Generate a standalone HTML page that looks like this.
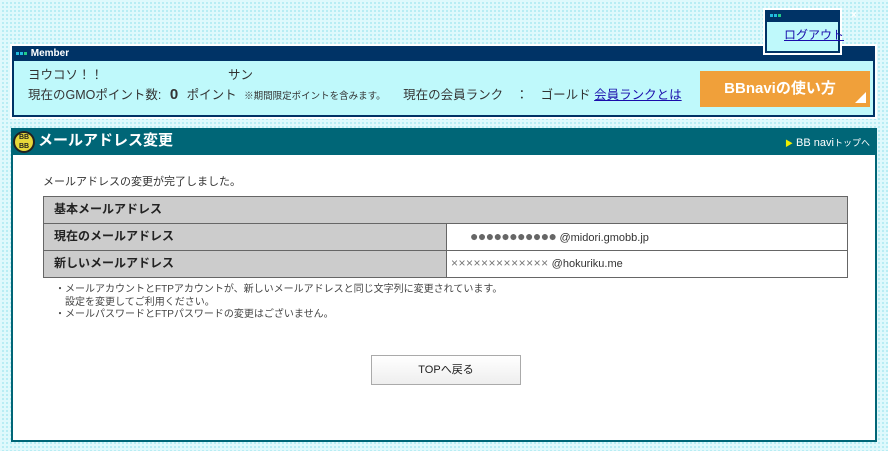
<!DOCTYPE html>
<html><head><meta charset="utf-8"><style>
*{margin:0;padding:0;box-sizing:border-box}
body{width:888px;height:451px;overflow:hidden;position:relative;font-family:"Liberation Sans","Noto Sans CJK JP",sans-serif;font-size:12px;color:#333;
background-color:#dff9fc;background-image:radial-gradient(circle,#b5ecf3 1px,transparent 1.2px);background-size:4px 4px;background-position:1px 1px}
.abs{position:absolute;line-height:1.2}
a{color:#1a0dab}
.hdr{background:#003366;color:#fff;font-weight:bold;font-size:10px}
.sq{display:inline-block;width:3px;height:3px;margin-right:1px;vertical-align:middle}
</style></head><body>
<!-- member -->
<div class="abs" style="left:10px;top:44px;width:867px;height:75px;background:#fff"></div>
<div class="abs" style="left:12px;top:46px;width:863px;height:71px;background:#003366"></div>
<div class="abs" style="left:14px;top:61px;width:859px;height:54px;background:#bff9fb"></div>
<div class="abs hdr" style="left:16px;top:47px;line-height:13px"><span class="sq" style="background:#2bd"></span><span class="sq" style="background:#2bd"></span><span class="sq" style="background:#2c8"></span> Member</div>
<div class="abs" style="left:28px;top:68px;font-size:12.5px">ヨウコソ！！</div>
<div class="abs" style="left:228px;top:68px;font-size:12.5px">サン</div>
<div class="abs" style="left:28px;top:86px;font-size:12.5px;white-space:nowrap">現在のGMOポイント数: <b style="font-size:15px;margin:0 5px">0</b> ポイント <span style="font-size:9.5px;margin:0 14px 0 4px">※期間限定ポイントを含みます。</span> 現在の会員ランク　：　ゴールド <a href="#">会員ランクとは</a></div>
<div class="abs" style="left:700px;top:71px;width:170px;height:36px;background:#f0a03a;color:#fff;font-weight:bold;font-size:15px;line-height:36px;text-align:center;padding-right:10px">BBnaviの使い方</div>
<div class="abs" style="left:855px;top:92px;width:0;height:0;border-left:11px solid transparent;border-bottom:11px solid #fff"></div>
<!-- logout -->
<div class="abs" style="left:763px;top:8px;width:79px;height:47px;background:#fff"></div>
<div class="abs" style="left:765px;top:10px;width:75px;height:43px;background:#003366"></div>
<div class="abs" style="left:767px;top:22px;width:71px;height:29px;background:#bff9fb"></div>
<div class="abs" style="left:770px;top:12px;line-height:6px"><span class="sq" style="background:#2bd"></span><span class="sq" style="background:#2bd"></span><span class="sq" style="background:#2c8"></span></div>
<div class="abs" style="left:851px;top:10px;color:#fff;font-size:10px;font-weight:bold">×</div>
<div class="abs" style="left:784px;top:28px;font-size:12px"><a href="#">ログアウト</a></div>
<!-- main -->
<div class="abs" style="left:11px;top:128px;width:866px;height:314px;background:#006677"></div>
<div class="abs" style="left:13px;top:155px;width:862px;height:285px;background:#fff"></div>
<div class="abs" style="left:13px;top:131px;width:22px;height:22px;border-radius:50%;background:#222"></div>
<div class="abs" style="left:15px;top:133px;width:18px;height:18px;border-radius:50%;background:#e8d83a;color:#222;font-size:7px;font-weight:bold;line-height:9px;text-align:center">BB<br>BB</div>
<div class="abs" style="left:38px;top:132px;color:#fff;font-weight:bold;font-size:15px">メールアドレス変更</div>
<div class="abs" style="left:785px;top:137px;color:#fff;font-size:11px"><span style="color:#ee0;font-size:8px">▶</span> BB navi<span style="font-size:9px">トップへ</span></div>
<div class="abs" style="left:43px;top:176px;font-size:11px">メールアドレスの変更が完了しました。</div>
<div class="abs" style="left:43px;top:196px;width:805px;height:82px;border:1px solid #666;background:#ccc"></div>
<div class="abs" style="left:446px;top:223px;width:401px;height:54px;background:#fff;border-left:1px solid #666"></div>
<div class="abs" style="left:44px;top:223px;width:803px;height:1px;background:#666"></div>
<div class="abs" style="left:44px;top:250px;width:803px;height:1px;background:#666"></div>
<div class="abs" style="left:54px;top:202px;font-weight:bold;color:#222">基本メールアドレス</div>
<div class="abs" style="left:54px;top:229px;font-weight:bold;color:#222">現在のメールアドレス</div>
<div class="abs" style="left:54px;top:256px;font-weight:bold;color:#222">新しいメールアドレス</div>
<div class="abs" style="left:470px;top:228px;font-size:11px"><span style="color:#666;font-size:14px;letter-spacing:-0.6px">●●●●●●●●●●●</span> @midori.gmobb.jp</div>
<div class="abs" style="left:451px;top:256px;font-size:11px"><span style="color:#777;font-size:12px;letter-spacing:0.5px">×××××××××××××</span> @hokuriku.me</div>
<div class="abs" style="left:55px;top:284px;font-size:10px;line-height:12.5px;color:#444">・メールアカウントとFTPアカウントが、新しいメールアドレスと同じ文字列に変更されています。<br>　設定を変更してご利用ください。<br>・メールパスワードとFTPパスワードの変更はございません。</div>
<div class="abs" style="left:371px;top:355px;width:150px;height:30px;border:1px solid #aaa;background:linear-gradient(#fff,#eee);text-align:center;line-height:28px;font-size:11px;color:#222">TOPへ戻る</div>
</body></html>
